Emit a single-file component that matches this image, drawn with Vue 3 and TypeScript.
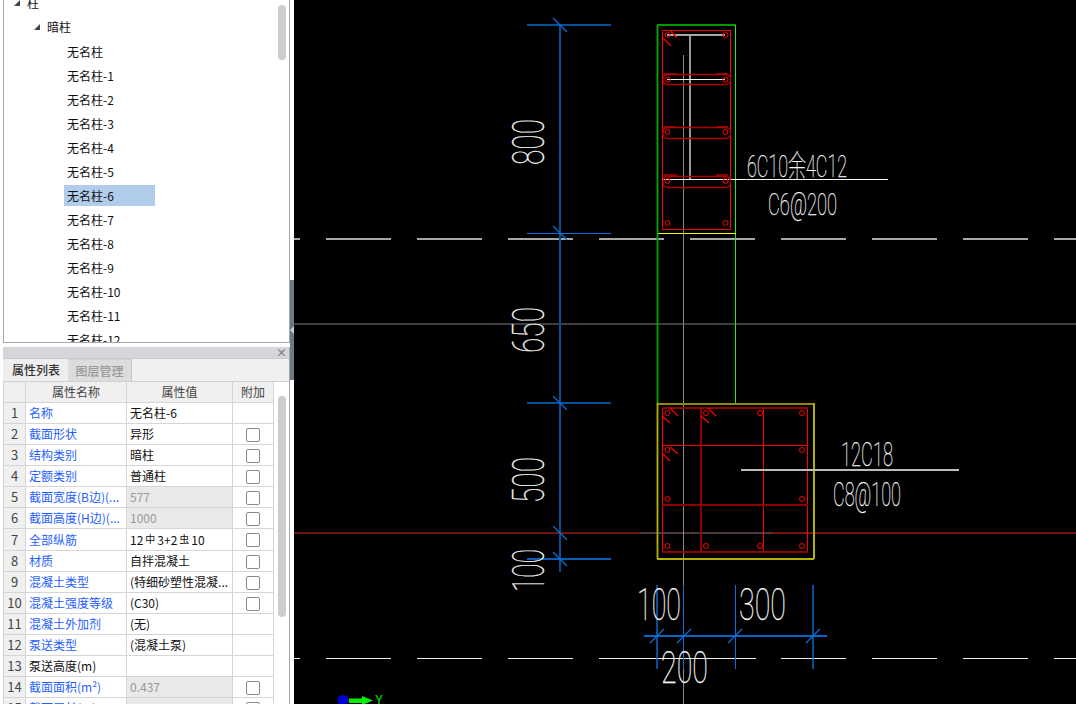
<script setup lang="ts">
interface PropRow {
  name: string;
  value: string;
  link?: boolean;
  locked?: boolean;
  check?: boolean;
}
interface Seg {
  d: string;
  color: string;
  w?: number;
}
interface CadText {
  t: string;
  x: number;
  y: number;
  size: number;
  len: number;
  rot?: boolean;
}

const leaves = ['无名柱', ...Array.from({ length: 12 }, (_, i) => `无名柱-${i + 1}`)];

const rows: PropRow[] = [
  { name: '名称', value: '无名柱-6', link: true },
  { name: '截面形状', value: '异形', link: true, check: true },
  { name: '结构类别', value: '暗柱', link: true, check: true },
  { name: '定额类别', value: '普通柱', link: true, check: true },
  { name: '截面宽度(B边)(...', value: '577', link: true, locked: true, check: true },
  { name: '截面高度(H边)(...', value: '1000', link: true, locked: true, check: true },
  { name: '全部纵筋', value: '', link: true, check: true },
  { name: '材质', value: '自拌混凝土', link: true, check: true },
  { name: '混凝土类型', value: '(特细砂塑性混凝...', link: true, check: true },
  { name: '混凝土强度等级', value: '(C30)', link: true, check: true },
  { name: '混凝土外加剂', value: '(无)', link: true },
  { name: '泵送类型', value: '(混凝土泵)', link: true },
  { name: '泵送高度(m)', value: '' },
  { name: '截面面积(m²)', value: '0.437', link: true, locked: true, check: true },
  { name: '截面周长(m)', value: '0.880', link: true, locked: true, check: true },
];

const RED = '#ff0000';
const DARK = '#8c0000';
const BLUE = '#0a6ed8';
const NAVY = '#00509e';

function dashes(y: number, color: string, w: number, skip = false): Seg[] {
  const out: Seg[] = [];
  for (let x = 235; x < 1076; x += 91) {
    // the 599 dash on the lower axis runs on into the next one
    const end = skip && x === 599 ? x + 157 : x + 65;
    if (skip && x === 690) continue;
    out.push({ d: `M${Math.max(x, 294)} ${y}H${end}`, color, w });
  }
  return out;
}

function slash(x: number, y: number, up = false): Seg {
  return up
    ? { d: `M${x - 7} ${y + 7}L${x + 7} ${y - 7}`, color: BLUE, w: 1.2 }
    : { d: `M${x - 7} ${y - 7}L${x + 7} ${y + 7}`, color: BLUE, w: 1.2 };
}

function stirrup(top: number, bottom: number): string {
  const mid = (top + bottom) / 2;
  return `M668 ${top}H725Q730.5 ${top} 730.5 ${mid}Q730.5 ${bottom} 725 ${bottom}H668Q663 ${bottom} 663 ${mid}Q663 ${top} 668 ${top}Z`;
}

// straight runs, kept on the pixel grid
const segs: Seg[] = [
  ...dashes(239, '#a8a8a8', 2),
  ...dashes(658.5, '#f0f0f0', 1, true),
  { d: 'M294 324H1076', color: '#404040', w: 2 },
  { d: 'M294 533H640', color: '#6a1616', w: 2 },
  { d: 'M640 533H772', color: '#4a3c3c', w: 2 },
  { d: 'M772 533H1076', color: '#7a1010', w: 2 },
  { d: 'M683.5 55V704', color: '#888888' },
  // outlines
  { d: 'M657 25H736', color: '#009800', w: 2 },
  { d: 'M735.5 25V403', color: '#20f020' },
  { d: 'M657 233.5H736', color: '#ffff00' },
  { d: 'M657 403.5H814', color: '#8c8c00', w: 2 },
  { d: 'M657 559H814M813.5 403V559', color: '#b4b400', w: 2 },
  // upper column rebar
  { d: 'M662.5 30.5H730.5V229.5H662.5Z', color: RED },
  { d: 'M690 35V180', color: '#999999', w: 2 },
  { d: 'M667 35H725', color: '#a8a8a8', w: 2 },
  { d: 'M667 79.5H725', color: '#f4f4f4' },
  { d: 'M664 74H677M716 74H728M664 127H677M716 127H728M664 175H677M716 175H728', color: DARK, w: 2 },
  // lower column rebar
  { d: 'M662.5 408V552.5M807.5 408V552.5M763.5 408V552.5M662 445.5H808', color: RED },
  { d: 'M662 408H808M662 552H808M662 505H808M701 408V552', color: DARK, w: 2 },
  // leaders
  { d: 'M662 179.5H887.5', color: '#f4f4f4' },
  { d: 'M741 470H959', color: '#bcbcbc', w: 2 },
  // vertical dimension chain
  { d: 'M560 25V572', color: NAVY, w: 2 },
  { d: 'M527 25H611M527 403H611', color: NAVY, w: 2 },
  { d: 'M527 233.5H611', color: BLUE },
  { d: 'M527 559H611', color: '#0a5cb8', w: 2 },
  // horizontal dimension chain
  { d: 'M644 636H827', color: '#0a64c8', w: 2 },
  { d: 'M683.5 585V669M735.5 585V669', color: BLUE },
];

// diagonals, curves and the lines that sit between two pixels
const curves: Seg[] = [
  { d: 'M657.5 25V403', color: '#00a800', w: 1.8 },
  { d: 'M657.5 403V559', color: '#b4b400', w: 1.8 },
  { d: 'M657 585V669M813 585V669', color: BLUE, w: 1.4 },
  { d: stirrup(74.5, 84.5), color: '#b00000', w: 1.3 },
  { d: stirrup(127.5, 138.5), color: '#b00000', w: 1.3 },
  { d: stirrup(176.5, 187.5), color: '#b00000', w: 1.3 },
  {
    d: 'M670 30L677 38M663 38L671 46M670 408L678 416M662 416L670 423M708 408L716 416M701 416L709 423M670 447L678 454M662 453L670 461',
    color: RED,
    w: 1.2,
  },
  slash(560, 25),
  slash(560, 233),
  slash(560, 403),
  slash(560, 533),
  slash(560, 559),
  slash(657, 636, true),
  slash(684, 636, true),
  slash(735, 636, true),
  slash(813, 636, true),
];

const bars: [number, number][] = [
  [667.5, 35], [725.5, 35], [667.5, 79.5], [725.5, 79.5],
  [667.5, 132], [725.5, 132], [667.5, 181], [725.5, 181],
  [667.5, 223], [725.5, 223],
  [667.5, 413], [706, 413], [760, 413], [802, 413],
  [667.5, 450], [802, 450], [667.5, 499], [802, 499],
  [667.5, 546], [706, 546], [760, 546], [802, 546],
];

const labels: CadText[] = [
  { t: '6C10余4C12', x: 747, y: 177, size: 31, len: 100 },
  { t: 'C6@200', x: 768, y: 215, size: 31, len: 69 },
  { t: '12C18', x: 841, y: 466, size: 33, len: 52 },
  { t: 'C8@100', x: 833, y: 506, size: 33, len: 68 },
  { t: '100', x: 637, y: 620, size: 44, len: 44 },
  { t: '300', x: 739, y: 620, size: 44, len: 47 },
  { t: '200', x: 661, y: 683, size: 44, len: 47 },
  { t: '800', x: 544, y: 165, size: 45, len: 46, rot: true },
  { t: '650', x: 544, y: 353, size: 45, len: 46, rot: true },
  { t: '500', x: 544, y: 503, size: 45, len: 46, rot: true },
  { t: '100', x: 544, y: 592, size: 45, len: 43, rot: true },
];

function labelTransform(l: CadText) {
  return l.rot ? `rotate(-90 ${l.x} ${l.y})` : undefined;
}
</script>

<template>
  <div class="page">
    <aside class="side">
      <div class="tree">
        <div class="tree-scroll">
          <div class="node lvl1"><i class="caret"></i>柱</div>
          <div class="node lvl2"><i class="caret"></i>暗柱</div>
          <div v-for="(leaf, i) in leaves" :key="leaf" class="node leaf">
            <span :class="{ picked: i === 6 }">{{ leaf }}</span>
          </div>
        </div>
        <div class="thumb tree-thumb"></div>
      </div>

      <div class="props">
        <div class="props-head"><span class="close">×</span></div>
        <div class="tabs">
          <div class="tab active">属性列表</div>
          <div class="tab">图层管理</div>
        </div>
        <div class="grid-wrap">
          <table class="grid">
            <colgroup>
              <col class="c-no" />
              <col class="c-name" />
              <col class="c-val" />
              <col class="c-add" />
            </colgroup>
            <thead>
              <tr>
                <th></th>
                <th>属性名称</th>
                <th>属性值</th>
                <th>附加</th>
              </tr>
            </thead>
            <tbody>
              <tr v-for="(r, i) in rows" :key="r.name">
                <td class="no">{{ i + 1 }}</td>
                <td class="name" :class="{ link: r.link }">{{ r.name }}</td>
                <td class="val" :class="{ locked: r.locked }">
                  <template v-if="i === 6">12<span class="steel">中</span>3+2<span class="steel">虫</span>10</template>
                  <template v-else>{{ r.value }}</template>
                </td>
                <td class="add"><i v-if="r.check" class="box"></i></td>
              </tr>
            </tbody>
          </table>
          <div class="thumb grid-thumb"></div>
        </div>
      </div>
    </aside>

    <div class="splitter">
      <div class="handle"><i class="handle-arrow"></i></div>
    </div>

    <svg class="canvas" viewBox="294 0 782 704" width="782" height="704">
      <path
        v-for="(s, i) in segs"
        :key="i"
        :d="s.d"
        :stroke="s.color"
        :stroke-width="s.w ?? 1"
        fill="none"
      />
      <g class="smooth">
        <path
          v-for="(s, i) in curves"
          :key="'c' + i"
          :d="s.d"
          :stroke="s.color"
          :stroke-width="s.w ?? 1"
          fill="none"
        />
        <circle
          v-for="(b, i) in bars"
          :key="'b' + i"
          :cx="b[0]"
          :cy="b[1]"
          r="2.5"
          fill="none"
          stroke="#ff0000"
        />
        <circle cx="343" cy="700.5" r="5.5" fill="#0000d8" />
        <path d="M349 698.5H362V696L373 700.5L362 705V703H349Z" fill="#00f000" />
      </g>
      <text
        v-for="(l, i) in labels"
        :key="'t' + i"
        class="cad"
        :x="l.x"
        :y="l.y"
        :font-size="l.size"
        :textLength="l.len"
        lengthAdjust="spacingAndGlyphs"
        :transform="labelTransform(l)"
      >{{ l.t }}</text>
      <text class="axis" x="375" y="704">Y</text>
    </svg>
  </div>
</template>

<style scoped>
.page {
  display: flex;
  width: 1076px;
  height: 704px;
  overflow: hidden;
  background: #fff;
  font-family: "Noto Sans CJK SC", "Noto Sans", sans-serif;
  font-size: 12px;
  color: #111;
}
.side {
  width: 287px;
  margin-left: 3px;
  display: flex;
  flex-direction: column;
  flex: none;
}
.tree {
  position: relative;
  height: 343px;
  flex: none;
  border: 1px solid #a8a8a8;
  border-top: 0;
  overflow: hidden;
  box-sizing: border-box;
}
.tree-scroll {
  margin-top: -8px;
}
.node {
  height: 24px;
  line-height: 24px;
  white-space: nowrap;
}
.lvl1 {
  padding-left: 10px;
  line-height: 22px;
}
.lvl2 {
  padding-left: 30px;
  line-height: 22px;
}
.leaf {
  padding-left: 60px;
}
.leaf span {
  display: inline-block;
  width: 91px;
  height: 21px;
  line-height: 21px;
  padding-left: 3px;
  box-sizing: border-box;
}
.leaf .picked {
  background: #b2cdec;
}
.caret {
  display: inline-block;
  width: 0;
  height: 0;
  margin-right: 7px;
  border-left: 6px solid transparent;
  border-bottom: 6px solid #444;
  vertical-align: 2px;
}
.thumb {
  position: absolute;
  width: 8px;
  background: #cdcdcd;
  border-radius: 4px;
}
.tree-thumb {
  left: 274px;
  top: 5px;
  height: 55px;
}
.props {
  margin-top: 4px;
  flex: 1;
  display: flex;
  flex-direction: column;
  min-height: 0;
  border-right: 1px solid #a8a8a8;
  background: #f0f0f0;
}
.props-head {
  height: 11px;
  flex: none;
  background: #d4d6da;
  display: flex;
  justify-content: flex-end;
  align-items: center;
  border-bottom: 1px solid #c8c8c8;
}
.close {
  color: #808080;
  font-size: 11px;
  line-height: 11px;
  margin-right: 2px;
  font-weight: 700;
}
.tabs {
  display: flex;
  height: 22px;
  flex: none;
  padding-left: 1px;
  border-bottom: 1px solid #d0d0d0;
}
.tab {
  width: 64px;
  height: 22px;
  line-height: 22px;
  text-align: center;
  font-weight: 500;
  color: #999;
  background: #dcdcdc;
  border-top: 1px solid #cfcfcf;
  border-right: 1px solid #c8c8c8;
  box-sizing: border-box;
}
.tab.active {
  color: #333;
  background: #eeeeee;
  border-top: 0;
  border-right: 0;
}
.grid-wrap {
  position: relative;
  flex: 1;
  min-height: 0;
  overflow: hidden;
  background: #fff;
  border-left: 1px solid #d0d0d0;
}
.grid {
  border-collapse: separate;
  border-spacing: 0;
  table-layout: fixed;
  width: 270px;
}
.c-no {
  width: 22px;
}
.c-name {
  width: 101px;
}
.c-val {
  width: 106px;
}
.c-add {
  width: 41px;
}
.grid th,
.grid td {
  height: 20px;
  padding: 0;
  border-right: 1px solid #d5d5d5;
  border-bottom: 1px solid #d5d5d5;
  font-weight: 400;
  white-space: nowrap;
  overflow: hidden;
  line-height: 20px;
}
.grid th {
  background: #f0f0f0;
  color: #444;
  text-align: center;
}
.no {
  background: #f0f0f0;
  color: #444;
  text-align: center;
  font-size: 13px;
}
.grid .name,
.grid .val {
  padding-left: 3px;
}
.link {
  color: #1f5fff;
}
.grid .locked {
  background: #e9e9e9;
  color: #999;
}
.steel {
  font-size: 10px;
  vertical-align: 2px;
  margin: 0 2px;
}
.add {
  text-align: center;
}
.box {
  display: inline-block;
  width: 14px;
  height: 14px;
  box-sizing: border-box;
  border: 1px solid #8a8a8a;
  border-radius: 2px;
  background: #fff;
  vertical-align: middle;
  margin-top: -2px;
}
.grid-thumb {
  left: 274px;
  top: 14px;
  height: 221px;
}
.splitter {
  width: 4px;
  flex: none;
  background: #fff;
  padding-top: 280px;
  box-sizing: border-box;
}
.handle {
  height: 100px;
  background: #6c7a88;
  display: flex;
  align-items: center;
}
.handle-arrow {
  width: 0;
  height: 0;
  border-top: 4px solid transparent;
  border-bottom: 4px solid transparent;
  border-right: 4px solid #c8ccd0;
}
.canvas {
  display: block;
  flex: none;
  background: #000;
  shape-rendering: crispEdges;
}
.smooth {
  shape-rendering: geometricPrecision;
}
.cad {
  font-family: Roboto, "Noto Sans CJK SC", sans-serif;
  font-weight: 100;
  fill: #f4f4f4;
  stroke: #ffffff;
  stroke-width: 0.25;
}
.axis {
  font-family: "Liberation Sans", sans-serif;
  font-size: 12px;
  fill: #00f000;
}
</style>
